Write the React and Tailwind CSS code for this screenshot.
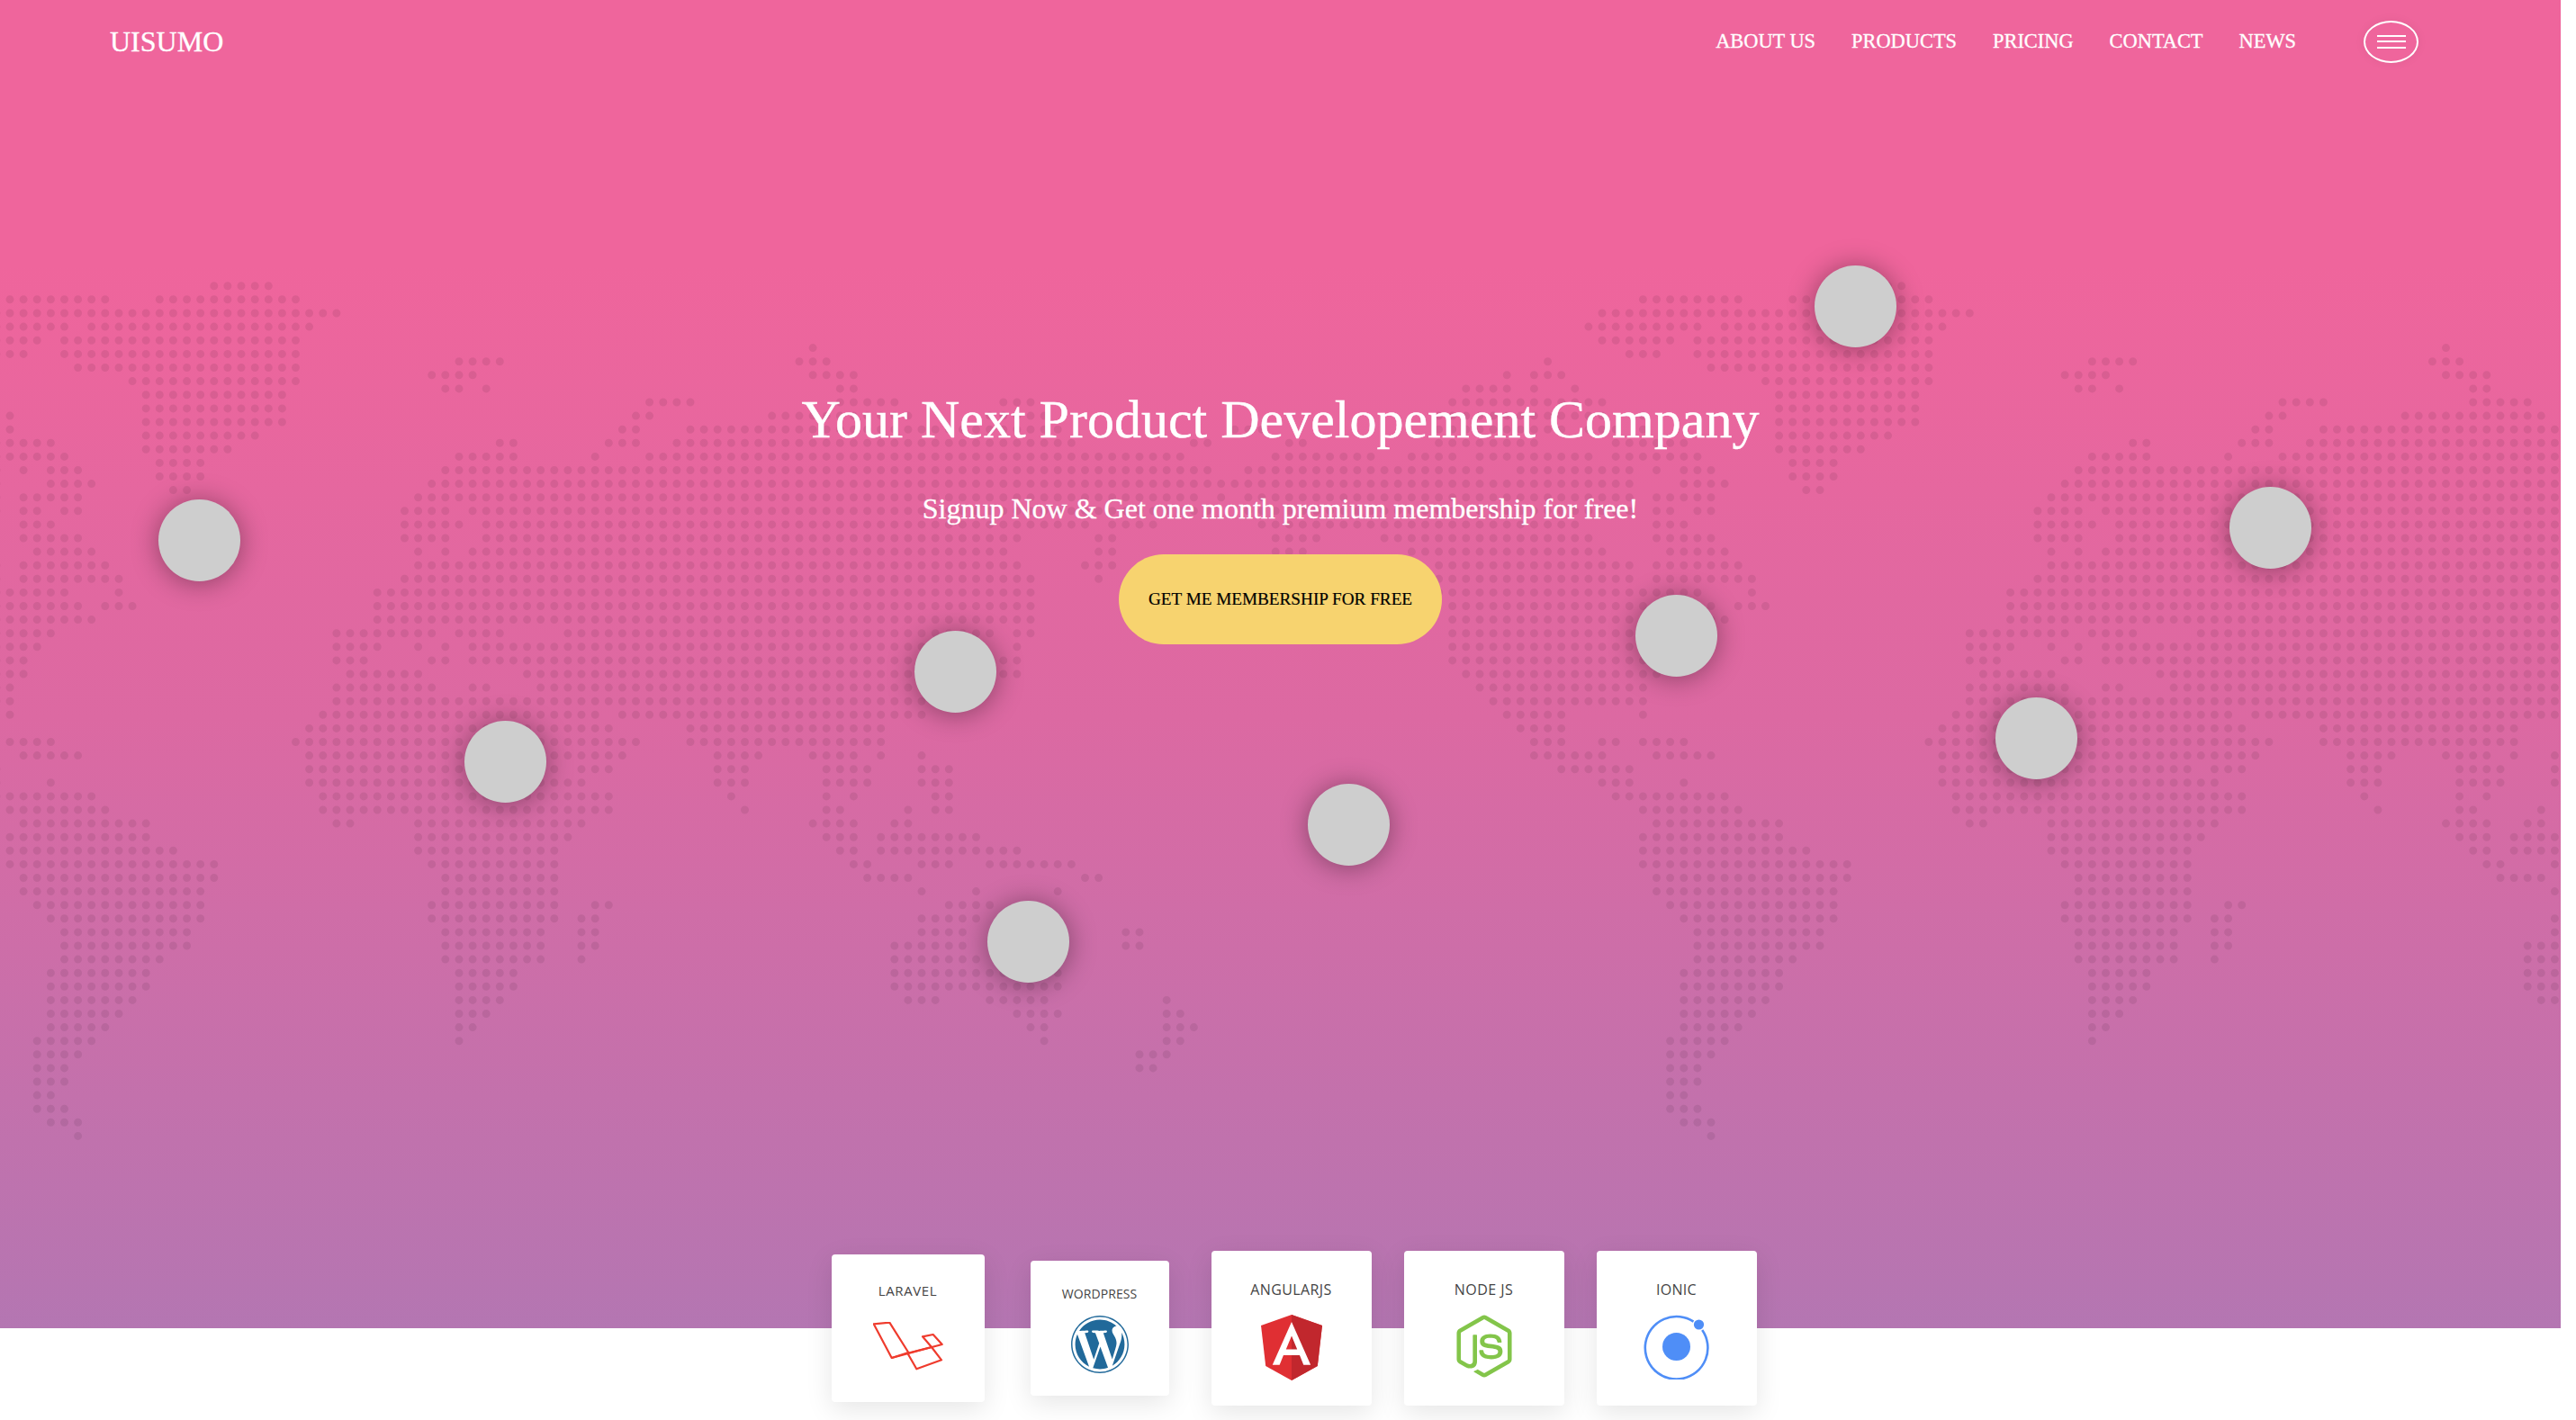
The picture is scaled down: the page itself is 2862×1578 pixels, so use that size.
import React from "react";
import { FaWordpress, FaNodeJs } from "react-icons/fa";

const PITCH = 15.12;
const PERIOD = 1814.4;
const LATTICE_A = [
  "15-19", "0-7 11-21", "0-24 117-119", "0-4 6-22 116-119", "0-2 4-21 117-119", "0-1 4-21 119", "5-21", "9-21",
  "10-20", "10-20", "10-20", "10-18", "10-16", "11-14", "11-14", "12-13",
];
const LATTICE_B = [
  "33-36 58-60 113", "31-34 59-62 110 112-114", "32 33 35 61 62 107-110 112 115", "47-50 61-65 73-75 106-117",
  "0 46 47 56-66 72-76 105-117", "0 45 46 50-77 90-92 105-114 116-118",
  "0-3 36 37 44-46 49-78 87 88 94 95 105-112 118 119", "0-4 33-37 43 47-86 93-100 103-106 108-116 118 119",
  "1 3-5 32-88 91-108 111-119", "3-6 31-119", "1-5 30-87 89 91-119", "1 2 4 5 29-32 34-88 91-119",
  "1-3 29-33 35-79 81-84 92-115", "1-5 29-32 35-74 80 81 93-96 101-116", "2-6 30 32 34-73 80 81 93-95 103-117",
  "1-7 30-74 79-81 105-119", "1-8 29-75 80 105-119", "0-4 8 27-75 105-119", "0-5 7-9 27-75 106-119", "0-6 27-75 106-119",
  "0-3 24-31 33-36 41-72 74 75 106-119", "0-2 24-27 30 32 34-70 74 106-119", "0 1 24-26 31 32 34-70 73 74 106-119",
  "0 1 25-30 38-69 73 74 107-119", "0 24-31 34 35 39-68 108-119", "0 24-68 109-119",
  "0 23-43 45-67 110-114", "22-44 50-64 111-114", "0-3 21-46 50-64 112-114 117 118", "1-5 22-45 52-55 59-62 64 67 112-117",
  "22-40 42-44 52-54 60-63 67-69 114-119", "3 22-42 52-54 60-63 67-69 117-119", "0-6 23-44 53 60 62 68 69 118 119",
  "0-7 23-44 54 60 61 66 68 69", "1-10 24 25 30-42 59-62 65 66", "0-10 30-41 60-62 64-71", "0-12 30-40 61 62 64-74",
  "0-15 31-40 62 63 67-69 72-78", "1-15 32-40 63-66 79 80", "1-14 32-40 67 71 77", "2-14 31-40 43 44 69-72",
  "3-14 31-40 42 43 67-71", "4-13 32-39 42 43 67-70 82 83", "4-13 32-39 42 43 65-70 73-77 82 83", "4-11 32-39 42 65-71 73-77",
  "3-10 33-37 65-77", "3-10 33-37 65-77", "3-9 33-36 66-68 72-76 85", "3-8 33-35 74-77 85 86", "3-7 33 34 75 76 85-87",
  "2-6 33 76 85 86", "2-5 83-85", "2-4 83 84", "2-4", "2 3", "2-4", "3-5", "5",
];

function rowPath(spec, y) {
  let d = "";
  spec.split(" ").forEach((part) => {
    const [a, b] = part.split("-").map(Number);
    for (let c = a; c <= (b ?? a); c++) {
      [-PERIOD, 0, PERIOD].forEach((off) => {
        const x = 11 + PITCH * c + off;
        if (x > -10 && x < 2855) d += `M${x.toFixed(1)} ${y.toFixed(1)}h0`;
      });
    }
  });
  return d;
}

const dotsPath =
  LATTICE_A.map((s, r) => rowPath(s, 317.7 + 15.13 * r)).join("") +
  rowPath("59", 386.6) +
  LATTICE_B.map((s, k) => rowPath(s, 401.7 + 15.1 * k)).join("");

function DotMap() {
  return (
    <svg className="absolute inset-0 w-full h-full" viewBox="0 0 2845 1476" aria-hidden="true">
      <path d={dotsPath} stroke="#000" strokeOpacity="0.075" strokeWidth="9" strokeLinecap="round" fill="none" />
    </svg>
  );
}

const pinClass = "absolute w-[91px] h-[91px] rounded-full bg-[#cecece] shadow-[0_2px_30px_rgba(0,0,0,0.38)]";

function Laravel() {
  return (
    <svg width="78" height="54" viewBox="0 0 78 54" fill="none" stroke="#ef3b2d" strokeWidth="2.2" strokeLinejoin="round">
      <path d="M0.7 2.3 18.3 0.7 39.3 34 20.7 40Z" />
      <path d="M20.7 40 76.7 25 66.7 14 55 16.3 65 28" />
      <path d="M38.3 34.7 65 28 76 42.3 48.3 52.3Z" />
    </svg>
  );
}

function Angular() {
  return (
    <svg width="68" height="73" viewBox="31.9 30 186.2 200">
      <polygon fill="#e02f33" points="125,30 31.9,63.2 46.1,186.3 125,230 203.9,186.3 218.1,63.2" />
      <polygon fill="#c1272d" points="125,30 125,230 203.9,186.3 218.1,63.2" />
      <path fill="#fff" fillRule="evenodd" d="M125 52.1 66.8 182.6h21.7l11.7-29.2h49.4l11.7 29.2H183L125 52.1zM142 135.4H108l17-40.9L142 135.4z" />
    </svg>
  );
}

function Ionic() {
  return (
    <svg width="73" height="73" viewBox="0 0 73 73">
      <path d="M55.5 8.6A34.8 34.8 0 1 0 65.2 18" fill="none" stroke="#4f8ef7" strokeWidth="2.6" />
      <circle cx="36.5" cy="36.5" r="15.5" fill="#4f8ef7" />
      <circle cx="61.5" cy="12" r="5.6" fill="#4f8ef7" />
    </svg>
  );
}

function Card({ className, labelClass, label, iconClass, children }) {
  return (
    <div className={`flex flex-col items-center shrink-0 bg-white rounded-[4px] shadow-[0_8px_30px_rgba(0,0,0,0.1)] ${className}`}>
      <div className={`font-['Open_Sans',sans-serif] uppercase text-[#444444] leading-none ${labelClass}`}>{label}</div>
      <div className={`flex items-center justify-center ${iconClass}`}>{children}</div>
    </div>
  );
}

export default function App() {
  return (
    <div className="w-full min-h-[1578px] bg-white font-['Liberation_Serif',serif] overflow-hidden">
      <section className="relative w-[2845px] h-[1476px] overflow-hidden bg-[linear-gradient(180deg,#ef659c_0%,#ef659c_20%,#dc69a2_54%,#b476b2_100%)]">
        <DotMap />
        <div className={`${pinClass} left-[176px] top-[555px]`} />
        <div className={`${pinClass} left-[516px] top-[801px]`} />
        <div className={`${pinClass} left-[1016px] top-[701px]`} />
        <div className={`${pinClass} left-[1097px] top-[1001px]`} />
        <div className={`${pinClass} left-[1453px] top-[871px]`} />
        <div className={`${pinClass} left-[1817px] top-[661px]`} />
        <div className={`${pinClass} left-[2016px] top-[295px]`} />
        <div className={`${pinClass} left-[2217px] top-[775px]`} />
        <div className={`${pinClass} left-[2477px] top-[541px]`} />

        <header className="relative flex items-center justify-between h-[92px] pl-[122px] pr-[158px] text-white [-webkit-text-stroke:0.3px_white]">
          <div className="text-[32px] leading-none">UISUMO</div>
          <div className="flex items-center">
            <nav className="flex items-center gap-[40px] text-[22.4px] leading-none">
              <span>ABOUT US</span>
              <span>PRODUCTS</span>
              <span>PRICING</span>
              <span>CONTACT</span>
              <span>NEWS</span>
            </nav>
            <div className="ml-[75px] flex flex-col items-center justify-center gap-[4.5px] w-[61px] h-[47px] rounded-[50%] border-2 border-white shadow-[0_0_12px_rgba(0,0,0,0.06)]">
              <span className="block w-[32px] h-[2px] bg-white" />
              <span className="block w-[32px] h-[2px] bg-white" />
              <span className="block w-[32px] h-[2px] bg-white" />
            </div>
          </div>
        </header>

        <div className="relative flex flex-col items-center pt-[338px] text-white">
          <h1 className="text-[60px] leading-[72px] font-normal [-webkit-text-stroke:0.4px_white]">Your Next Product Developement Company</h1>
          <p className="mt-[43px] text-[32px] leading-[40px] [-webkit-text-stroke:0.3px_white]">Signup Now &amp; Get one month premium membership for free!</p>
          <button className="mt-[31px] w-[359px] h-[100px] rounded-[50px] bg-[#f7d36f] text-black text-[19.2px] font-['Liberation_Serif',serif] [-webkit-text-stroke:0.2px_black]">
            GET ME MEMBERSHIP FOR FREE
          </button>
        </div>
      </section>

      <div className="relative w-[2845px] -mt-[86px] pl-[30px] pb-[16px] flex items-center justify-center">
        <Card className="w-[170px] h-[164px] mr-[51px]" label="LARAVEL" labelClass="pt-[33px] text-[15px] tracking-[0.6px]" iconClass="mt-[27px]">
          <Laravel />
        </Card>
        <Card className="w-[154px] h-[150px] mr-[47px]" label="WORDPRESS" labelClass="pt-[30px] text-[14px] tracking-[0.1px]" iconClass="mt-[16px]">
          <FaWordpress size={66} color="#21699a" />
        </Card>
        <Card className="w-[178px] h-[172px] mr-[36px]" label="ANGULARJS" labelClass="pt-[35px] text-[16px] tracking-[0.4px]" iconClass="mt-[20px]">
          <Angular />
        </Card>
        <Card className="w-[178px] h-[172px] mr-[36px]" label="NODE JS" labelClass="pt-[35px] text-[16px] tracking-[0.5px]" iconClass="mt-[20px]">
          <FaNodeJs size={70} color="#83c54a" />
        </Card>
        <Card className="w-[178px] h-[172px]" label="IONIC" labelClass="pt-[35px] text-[16px] tracking-[0.3px]" iconClass="mt-[19px]">
          <Ionic />
        </Card>
      </div>
    </div>
  );
}
